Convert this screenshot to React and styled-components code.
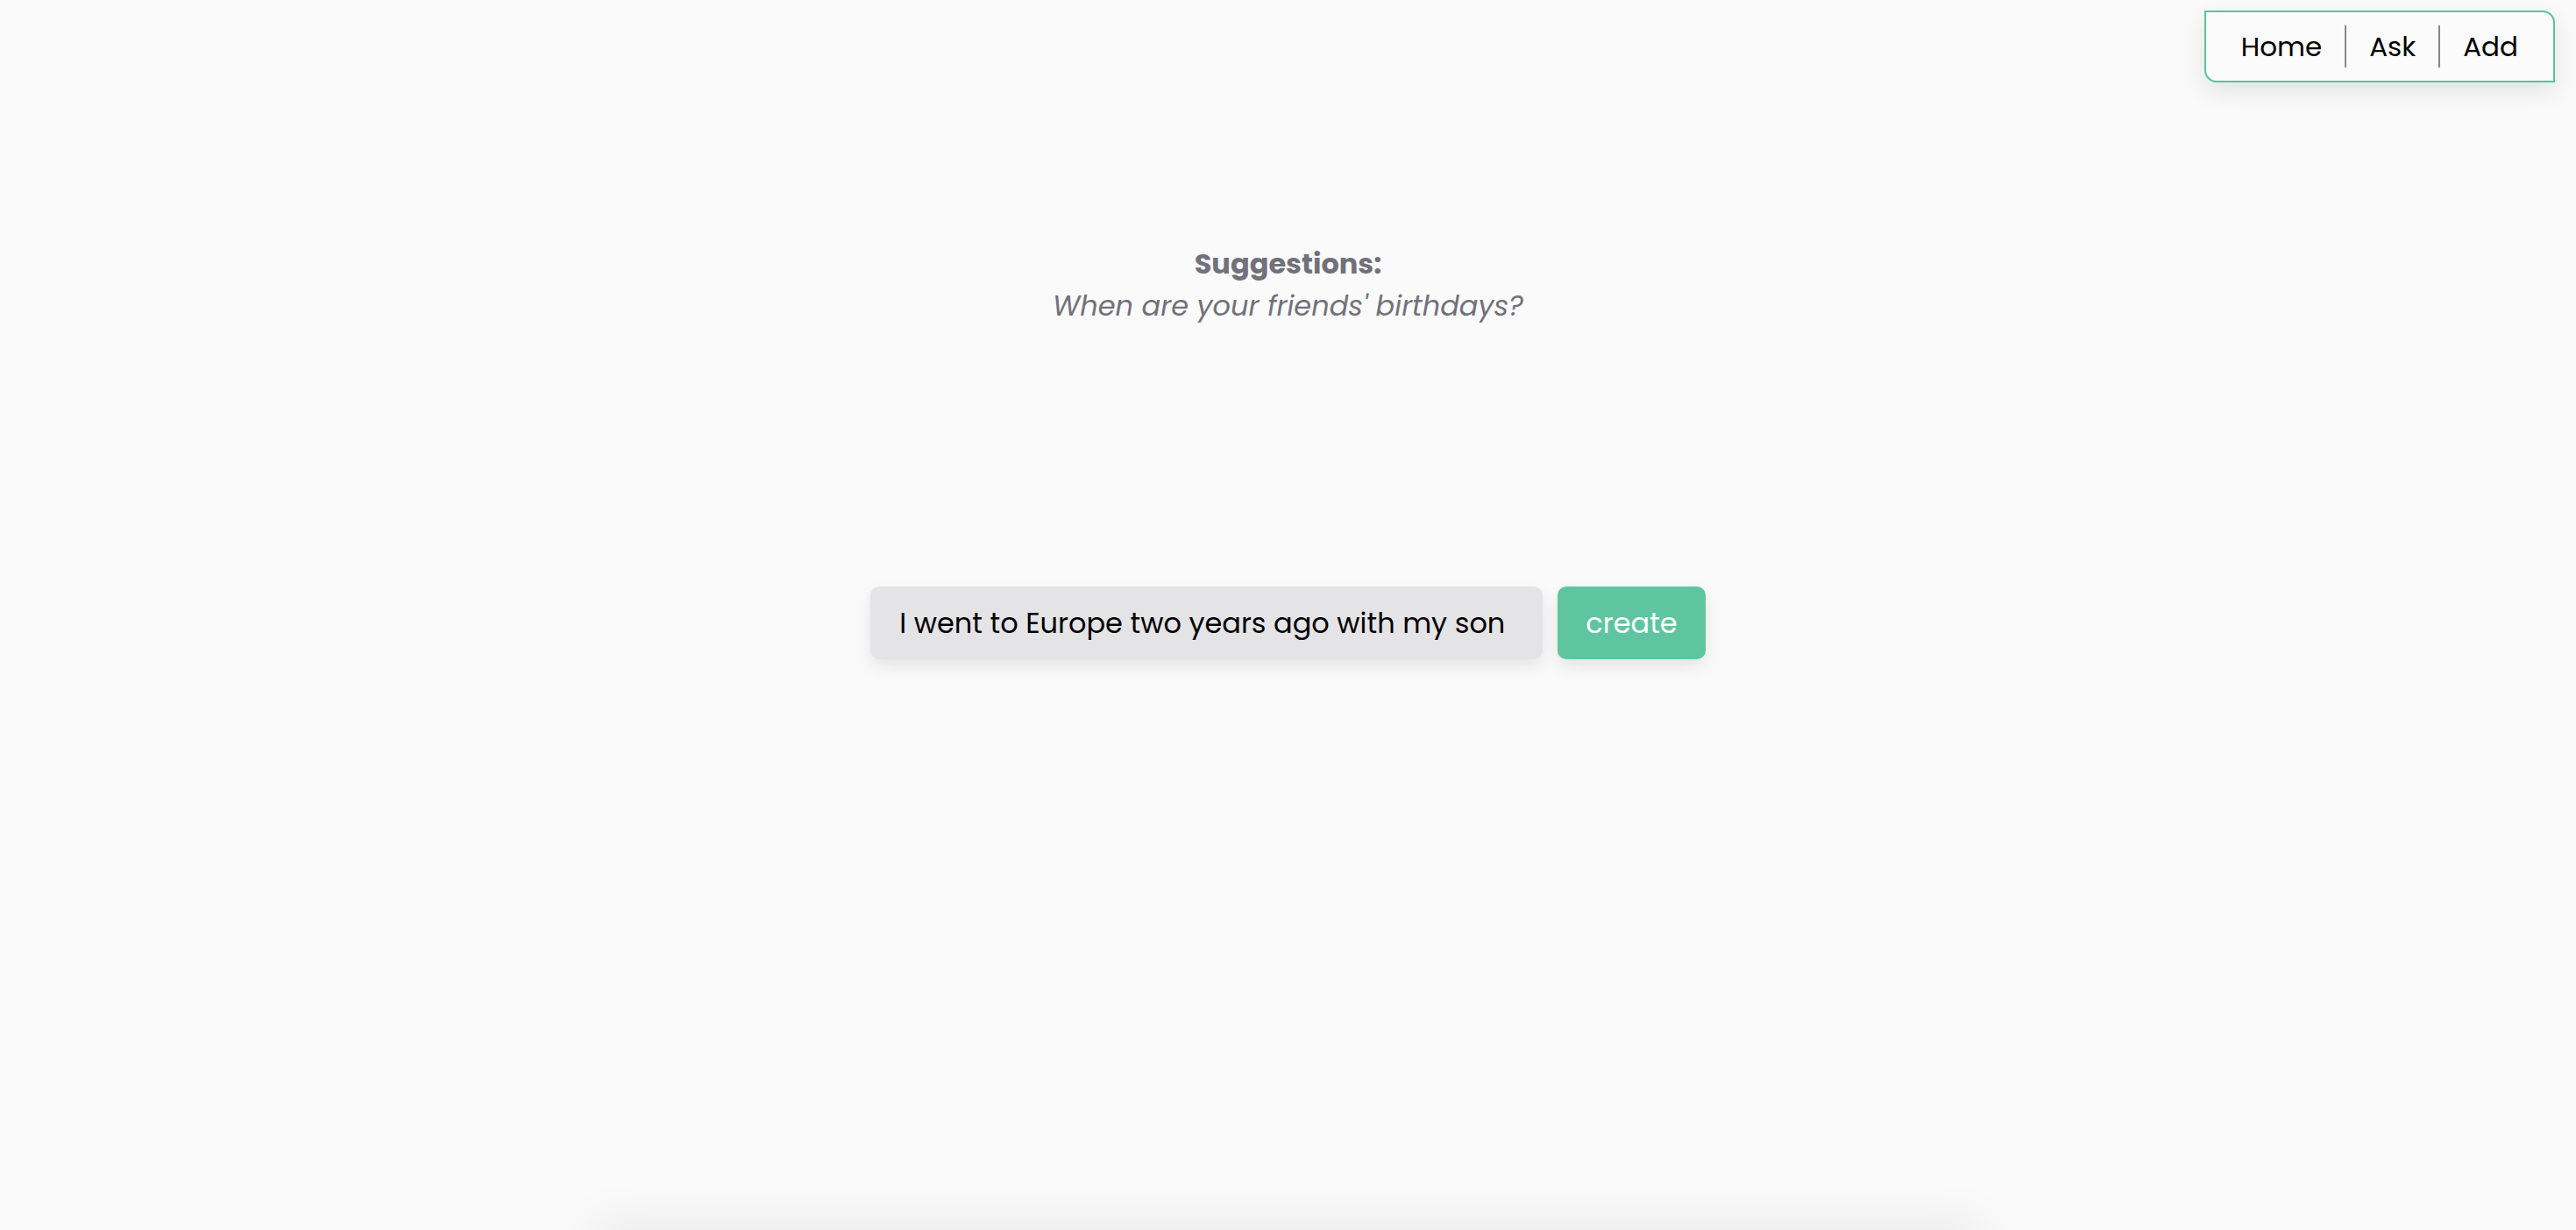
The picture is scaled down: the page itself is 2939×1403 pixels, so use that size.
import styled, { createGlobalStyle } from 'styled-components'

const GlobalStyle = createGlobalStyle`
  html, body {
    margin: 0;
    padding: 0;
    background: #fafafa;
  }

  body {
    font-family: 'Poppins', 'Inter', sans-serif;
    color: #000;
  }

  * {
    box-sizing: border-box;
  }
`

const Page = styled.div`
  display: flex;
  flex-direction: column;
  align-items: center;
  height: 100vh;
  overflow: hidden;
  background: #fafafa;
`

const Header = styled.header`
  align-self: stretch;
  display: flex;
  justify-content: flex-end;
  padding: 12px 24px 0;
`

const Nav = styled.nav`
  display: flex;
  align-items: center;
  padding: 15px 14px;
  border: 2px solid #58c49c;
  border-radius: 0 14px 0 14px;
  background: #fbfbfb;
  box-shadow: 0 10px 28px rgba(0, 0, 0, 0.1);
`

const NavLink = styled.a`
  padding: 0 26px;
  font-size: 31px;
  line-height: 48px;
  color: #000;
  text-decoration: none;
  cursor: pointer;

  & + & {
    border-left: 2px solid #888;
  }
`

const Suggestions = styled.section`
  margin-top: 183px;
  text-align: center;
  color: #71717a;
  font-size: 32px;
  line-height: 48px;
`

const SuggestionsTitle = styled.h2`
  margin: 0;
  font-size: 32px;
  font-weight: 700;
`

const SuggestionsText = styled.p`
  margin: 0;
  font-style: italic;
`

const CreateForm = styled.form`
  display: flex;
  gap: 17px;
  margin-top: 296px;
`

const MemoryInput = styled.input`
  width: 767px;
  height: 83px;
  padding: 0 33px;
  border: none;
  border-radius: 10px;
  background: #e4e4e7;
  box-shadow: 0 8px 18px rgba(0, 0, 0, 0.09);
  font-family: inherit;
  font-size: 32px;
  color: #000;
  outline: none;
`

const CreateButton = styled.button`
  height: 83px;
  padding: 0 32px;
  border: none;
  border-radius: 10px;
  background: #5ec5a0;
  box-shadow: 0 8px 18px rgba(0, 0, 0, 0.09);
  font-family: inherit;
  font-size: 32px;
  color: #fff;
  cursor: pointer;
`

const Footer = styled.footer`
  margin-top: auto;
  margin-bottom: -40px;
  width: 1580px;
  height: 40px;
  flex-shrink: 0;
  background: #fafafa;
  box-shadow: 0 0 60px rgba(0, 0, 0, 0.1);
`

function App() {
  const handleSubmit = (event) => {
    event.preventDefault()
  }

  return (
    <>
      <GlobalStyle />
      <Page>
        <Header>
          <Nav>
            <NavLink>Home</NavLink>
            <NavLink>Ask</NavLink>
            <NavLink>Add</NavLink>
          </Nav>
        </Header>

        <Suggestions>
          <SuggestionsTitle>Suggestions:</SuggestionsTitle>
          <SuggestionsText>When are your friends' birthdays?</SuggestionsText>
        </Suggestions>

        <CreateForm onSubmit={handleSubmit}>
          <MemoryInput
            type="text"
            defaultValue="I went to Europe two years ago with my son"
          />
          <CreateButton type="submit">create</CreateButton>
        </CreateForm>

        <Footer />
      </Page>
    </>
  )
}

export default App
